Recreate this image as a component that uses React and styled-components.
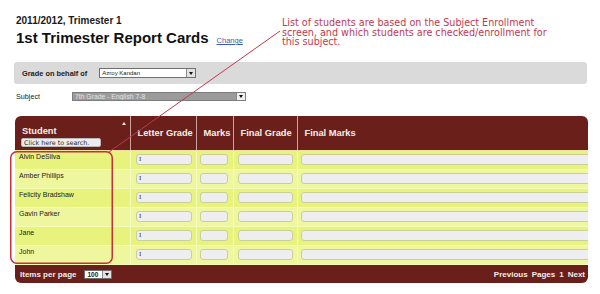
import React from 'react';
import styled, { createGlobalStyle } from 'styled-components';

const Global = createGlobalStyle`
  html, body { margin: 0; padding: 0; background: #fff; }
  body { font-family: "Liberation Sans", Arial, sans-serif; color: #222; }
  * { box-sizing: border-box; }
`;

const MAROON = '#6a1f1b';
const COLS = '115px 66px 37px 64px 1fr';

const Page = styled.div`
  position: relative;
  width: 600px;
  height: 294px;
  overflow: hidden;
  padding: 15px 12px 0 15px;
`;

const Term = styled.div`
  font-weight: bold;
  font-size: 10px;
  line-height: 12px;
  margin-left: 1px;
  color: #1a1a1a;
`;

const TitleRow = styled.div`
  display: flex;
  align-items: baseline;
  gap: 8px;
  margin-top: 2px;
  margin-left: 1px;
`;

const Title = styled.h1`
  margin: 0;
  font-size: 15px;
  line-height: 18px;
  font-weight: bold;
  color: #111;
`;

const ChangeLink = styled.a`
  font-size: 7.5px;
  color: #3a5bb0;
  text-decoration: underline;
`;

const Annotation = styled.div`
  position: absolute;
  left: 282px;
  top: 18px;
  font-family: "DejaVu Sans", Verdana, sans-serif;
  font-size: 9.6px;
  line-height: 9.7px;
  color: #c2384f;
  white-space: nowrap;
`;

const GrayBar = styled.div`
  display: flex;
  align-items: center;
  gap: 12px;
  width: 573px;
  height: 22px;
  margin: 15px 0 0 -1px;
  padding-left: 8px;
  background: #dadada;
  border-radius: 3px;
`;

const BarLabel = styled.span`
  font-weight: bold;
  font-size: 7.4px;
  color: #222;
`;

const SelectBox = styled.div`
  display: flex;
  align-items: stretch;
  width: ${p => p.$w}px;
  height: ${p => p.$h || 10}px;
  border: 1px solid ${p => (p.$gray ? '#7d7d7d' : '#6f6f6f')};
  background: ${p => (p.$gray ? '#9b9b9b' : '#fff')};
`;

const SelectText = styled.span`
  flex: 1;
  font-size: ${p => p.$fs || 6}px;
  line-height: ${p => (p.$h || 10) - 2}px;
  padding-left: 2px;
  color: ${p => (p.$gray ? '#e4e4e4' : '#222')};
  white-space: nowrap;
  overflow: hidden;
`;

const ArrowBox = styled.span`
  width: 9px;
  display: flex;
  align-items: center;
  justify-content: center;
  background: ${p => (p.$gray ? '#f0f0f0' : '#e2e2e2')};
  border-left: 1px solid #8a8a8a;
  &::after {
    content: '';
    border-left: 2.5px solid transparent;
    border-right: 2.5px solid transparent;
    border-top: 3px solid #111;
  }
`;

const Select = ({ w, h, gray, fs, children }) => (
  <SelectBox $w={w} $h={h} $gray={gray}>
    <SelectText $gray={gray} $h={h} $fs={fs}>{children}</SelectText>
    <ArrowBox $gray={gray} />
  </SelectBox>
);

const SubjectRow = styled.div`
  display: flex;
  align-items: center;
  height: 9px;
  margin-top: 8px;
  margin-left: 1px;
`;

const SubjectLabel = styled.span`
  width: 56px;
  font-size: 7.2px;
  color: #222;
`;

const Table = styled.div`
  width: 573px;
  margin-top: 15px;
  border-radius: 6px;
  overflow: hidden;
`;

const HeadRow = styled.div`
  display: grid;
  grid-template-columns: ${COLS};
  height: 35px;
  background: ${MAROON};
  border-bottom: 1px solid #efe2a0;
`;

const HeadCell = styled.div`
  position: relative;
  display: flex;
  align-items: center;
  padding-left: 6.5px;
  font-weight: bold;
  font-size: 9.3px;
  color: #f6efe8;
  white-space: nowrap;
  border-left: ${p => (p.$first ? 'none' : '1px solid #c9a49e')};
`;

const StudentHead = styled(HeadCell)`
  flex-direction: column;
  align-items: flex-start;
  padding: 10px 0 0 7px;
  line-height: 10px;
`;

const SortArrow = styled.span`
  position: absolute;
  right: 4px;
  top: 6px;
  border-left: 2.5px solid transparent;
  border-right: 2.5px solid transparent;
  border-bottom: 3.5px solid #f3ece6;
`;

const SearchBox = styled.div`
  margin: 2px 0 0 -1px;
  width: 80px;
  height: 9px;
  padding-left: 2px;
  font-family: "DejaVu Sans", Verdana, sans-serif;
  font-weight: normal;
  font-size: 6.4px;
  line-height: 8px;
  color: #2a2a2a;
  background: #ececec;
  border: 1px solid #b9b9b9;
  border-radius: 2px;
`;

const Row = styled.div`
  display: grid;
  grid-template-columns: ${COLS};
  height: 19px;
  background: ${p => (p.$alt ? '#eef79e' : '#e7f37d')};
  border-bottom: 1px solid #f4fab8;
`;

const NameCell = styled.div`
  padding: 2px 0 0 4px;
  font-size: 7px;
  line-height: 8px;
  color: #222;
  white-space: nowrap;
`;

const FieldCell = styled.div`
  display: flex;
  padding: 3px 0 0 ${p => p.$pl}px;
  border-left: 1px solid #f6fbc4;
  overflow: hidden;
`;

const Field = styled.div`
  width: ${p => (p.$w ? `${p.$w}px` : 'calc(100% + 4px)')};
  flex: none;
  height: 11px;
  background: #eeeef0;
  border: 1px solid #c9cf98;
  border-radius: 3px;
  font-family: "Liberation Serif", "Times New Roman", serif;
  font-size: 7px;
  line-height: 9px;
  padding-left: 2px;
  color: #333;
`;

const Footer = styled.div`
  display: flex;
  align-items: center;
  justify-content: space-between;
  height: 18px;
  padding: 0 3px 0 5px;
  background: ${MAROON};
  color: #f3ece6;
  font-weight: bold;
  font-size: 8px;
`;

const PerPage = styled.div`
  display: flex;
  align-items: center;
  gap: 8px;
`;

const Pager = styled.div`
  display: flex;
  gap: 4px;
  font-size: 8px;
`;

const Overlay = styled.svg`
  position: absolute;
  left: 0;
  top: 0;
  pointer-events: none;
`;

const students = ['Alvin DeSilva', 'Amber Phillips', 'Felicity Bradshaw', 'Gavin Parker', 'Jane', 'John'];

export default function App() {
  return (
    <>
      <Global />
      <Page>
        <Term>2011/2012, Trimester 1</Term>
        <TitleRow>
          <Title>1st Trimester Report Cards</Title>
          <ChangeLink href="#">Change</ChangeLink>
        </TitleRow>
        <Annotation>
          List of students are based on the Subject Enrollment<br />
          screen, and which students are checked/enrollment for<br />
          this subject.
        </Annotation>

        <GrayBar>
          <BarLabel>Grade on behalf of</BarLabel>
          <Select w={97} h={10}>Azroy Kandan</Select>
        </GrayBar>

        <SubjectRow>
          <SubjectLabel>Subject</SubjectLabel>
          <Select w={174} h={9} gray fs={6.8}>7th Grade - English 7-8</Select>
        </SubjectRow>

        <Table>
          <HeadRow>
            <StudentHead $first>
              Student
              <SearchBox>Click here to search.</SearchBox>
              <SortArrow />
            </StudentHead>
            <HeadCell>Letter Grade</HeadCell>
            <HeadCell>Marks</HeadCell>
            <HeadCell>Final Grade</HeadCell>
            <HeadCell>Final Marks</HeadCell>
          </HeadRow>
          {students.map((s, i) => (
            <Row key={s} $alt={i % 2 === 1}>
              <NameCell>{s}</NameCell>
              <FieldCell $pl={5}><Field $w={56}>I</Field></FieldCell>
              <FieldCell $pl={3}><Field $w={28} /></FieldCell>
              <FieldCell $pl={4}><Field $w={55} /></FieldCell>
              <FieldCell $pl={3}><Field /></FieldCell>
            </Row>
          ))}
          <Footer>
            <PerPage>
              <span>Items per page</span>
              <Select w={28} h={9} fs={6.5}>100</Select>
            </PerPage>
            <Pager>
              <span>Previous</span>
              <span>Pages</span>
              <span>1</span>
              <span>Next</span>
            </Pager>
          </Footer>
        </Table>

        <Overlay width="600" height="294" viewBox="0 0 600 294">
          <rect x="10.75" y="151.75" width="101.5" height="111.5" rx="6" fill="none" stroke="#c4313b" strokeWidth="1.5" />
          <line x1="280" y1="31" x2="109" y2="152" stroke="#c2384f" strokeWidth="1" />
        </Overlay>
      </Page>
    </>
  );
}
